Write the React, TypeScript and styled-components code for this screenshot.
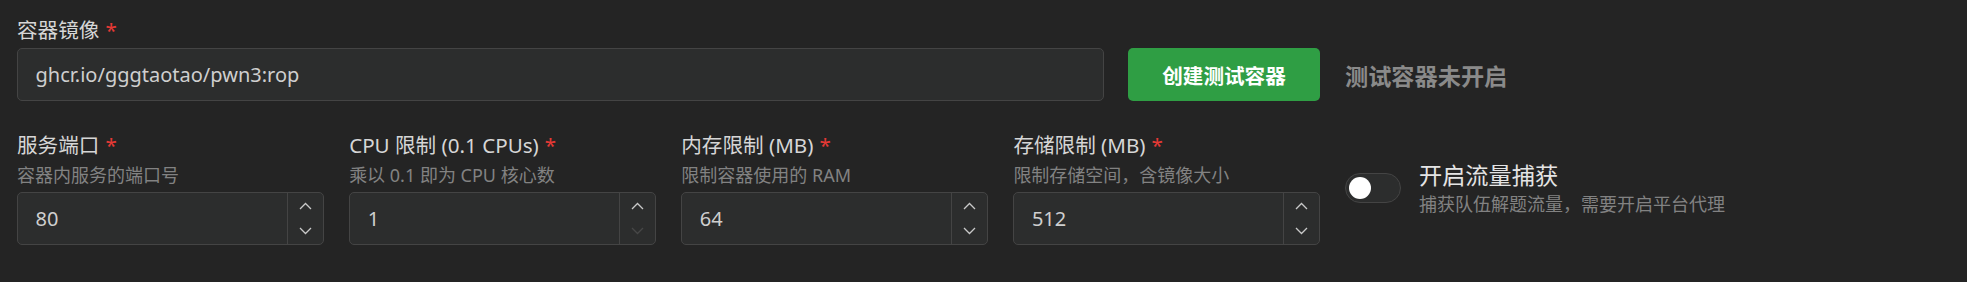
import React from "react";
import styled, { createGlobalStyle } from "styled-components";

const GlobalStyle = createGlobalStyle`
  html, body {
    margin: 0;
    padding: 0;
    background: #242424;
  }
  body {
    font-family: "Noto Sans", "Noto Sans CJK SC", sans-serif;
    color: #cfcfcf;
  }
`;

type TParam = {
  label: string;
  desc: string;
  value: string;
  downDisabled?: boolean;
};

const params: TParam[] = [
  { label: "服务端口", desc: "容器内服务的端口号", value: "80" },
  {
    label: "CPU 限制 (0.1 CPUs)",
    desc: "乘以 0.1 即为 CPU 核心数",
    value: "1",
    downDisabled: true,
  },
  { label: "内存限制 (MB)", desc: "限制容器使用的 RAM", value: "64" },
  { label: "存储限制 (MB)", desc: "限制存储空间，含镜像大小", value: "512" },
];

const Chevron = ({ up }: { up?: boolean }) => (
  <svg width="13" height="8" viewBox="0 0 13 8" fill="none">
    <polyline
      points={up ? "1,7 6.5,1.5 12,7" : "1,1 6.5,6.5 12,1"}
      stroke="currentColor"
      strokeWidth="1.3"
    />
  </svg>
);

export default function App() {
  return (
    <>
      <GlobalStyle />
      <Page>
        <ImageRow>
          <Field>
            <Label>
              容器镜像<Required>*</Required>
            </Label>
            <TextBox defaultValue="ghcr.io/gggtaotao/pwn3:rop" />
          </Field>
          <CreateButton>创建测试容器</CreateButton>
        </ImageRow>
        <StatusCell>测试容器未开启</StatusCell>

        <ParamGrid>
          {params.map((p) => (
            <Field key={p.label}>
              <Label>
                {p.label}
                <Required>*</Required>
              </Label>
              <Desc>{p.desc}</Desc>
              <NumberBox>
                <NumberText defaultValue={p.value} />
                <Controls>
                  <ControlButton>
                    <Chevron up />
                  </ControlButton>
                  <ControlButton disabled={p.downDisabled}>
                    <Chevron />
                  </ControlButton>
                </Controls>
              </NumberBox>
            </Field>
          ))}
        </ParamGrid>
        <SwitchCell>
          <Track>
            <Thumb />
          </Track>
          <SwitchText>
            <SwitchTitle>开启流量捕获</SwitchTitle>
            <SwitchDesc>捕获队伍解题流量，需要开启平台代理</SwitchDesc>
          </SwitchText>
        </SwitchCell>
      </Page>
    </>
  );
}

const Page = styled.div`
  display: grid;
  grid-template-columns: 1fr 605px;
  align-content: start;
  column-gap: 25px;
  row-gap: 29px;
  padding: 14.5px 17px 0;
  height: 282px;
  box-sizing: border-box;
`;

const ImageRow = styled.div`
  display: flex;
  align-items: flex-end;
  gap: 24px;
`;

const Field = styled.div`
  display: flex;
  flex-direction: column;
  flex: 1;
  min-width: 0;
`;

const Label = styled.div`
  font-size: 20.6px;
  font-weight: 400;
  line-height: 30px;
  color: #d6d6d6;
  margin-bottom: 3.5px;
`;

const Required = styled.span`
  color: #e53935;
  margin-left: 6px;
`;

const Desc = styled.div`
  font-size: 18px;
  line-height: 20px;
  color: #828282;
  margin-top: 1.5px;
  margin-bottom: 7px;
`;

const TextBox = styled.input`
  height: 53px;
  box-sizing: border-box;
  border: 1px solid #444444;
  border-radius: 5px;
  background: #2c2d2d;
  padding: 0 17.5px;
  font: inherit;
  font-size: 20px;
  color: #cfcfcf;
  outline: none;
`;

const CreateButton = styled.button`
  width: 192px;
  height: 53px;
  flex: none;
  border: none;
  border-radius: 5px;
  background: #2f9e44;
  color: #ffffff;
  font: inherit;
  font-size: 20.6px;
  font-weight: 700;
`;

const StatusCell = styled.div`
  align-self: end;
  height: 53px;
  display: flex;
  align-items: center;
  font-size: 23.2px;
  font-weight: 700;
  color: #8a8a8a;
`;

const ParamGrid = styled.div`
  display: grid;
  grid-template-columns: repeat(4, 1fr);
  column-gap: 25.5px;
`;

const NumberBox = styled.div`
  display: flex;
  height: 53px;
  box-sizing: border-box;
  border: 1px solid #444444;
  border-radius: 5px;
  background: #2c2d2d;
  overflow: hidden;
`;

const NumberText = styled.input`
  flex: 1;
  min-width: 0;
  border: none;
  background: transparent;
  padding: 0 17.5px;
  font: inherit;
  font-size: 20px;
  color: #cfcfcf;
  outline: none;
`;

const Controls = styled.div`
  width: 35px;
  display: flex;
  flex-direction: column;
  border-left: 1px solid #444444;
`;

const ControlButton = styled.div<{ disabled?: boolean }>`
  flex: 1;
  display: flex;
  align-items: center;
  justify-content: center;
  color: ${(props) => (props.disabled ? "#474747" : "#c9c9c9")};
`;

const SwitchCell = styled.div`
  align-self: center;
  display: flex;
  align-items: center;
  gap: 18px;
`;

const Track = styled.div`
  width: 56px;
  height: 30px;
  box-sizing: border-box;
  border: 1px solid #444444;
  border-radius: 15px;
  background: #2c2d2d;
  display: flex;
  align-items: center;
  padding-left: 3px;
`;

const Thumb = styled.div`
  width: 22px;
  height: 22px;
  border-radius: 50%;
  background: #ffffff;
`;

const SwitchText = styled.div`
  display: flex;
  flex-direction: column;
  gap: 2px;
`;

const SwitchTitle = styled.div`
  font-size: 23.2px;
  line-height: 30px;
  color: #e4e4e4;
`;

const SwitchDesc = styled.div`
  font-size: 18px;
  line-height: 24px;
  color: #828282;
`;
